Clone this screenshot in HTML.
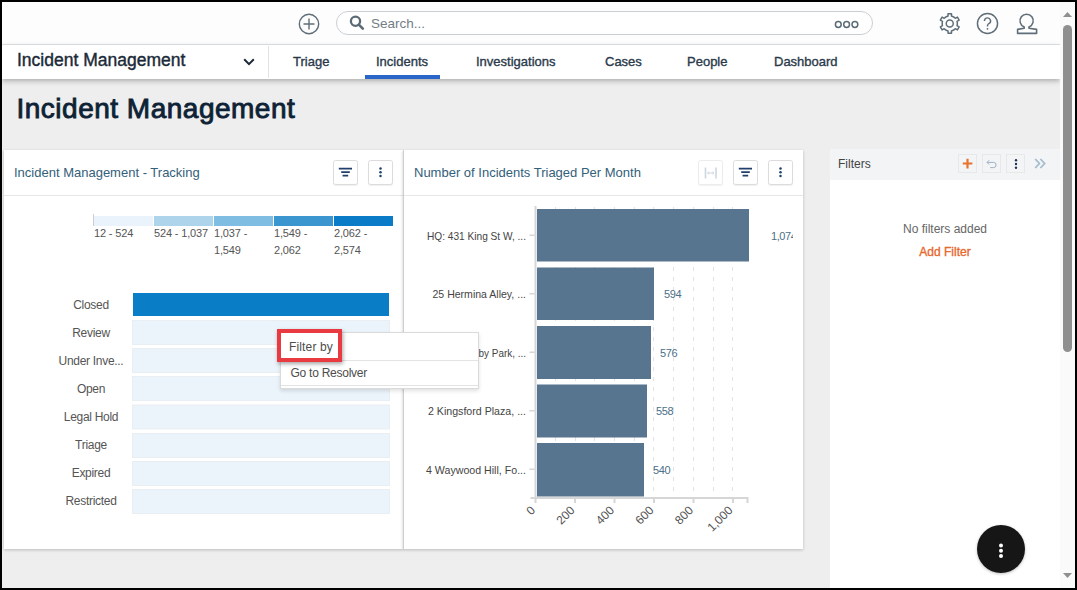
<!DOCTYPE html>
<html><head><meta charset="utf-8">
<style>
*{box-sizing:border-box;margin:0;padding:0}
html,body{width:1077px;height:590px;overflow:hidden;background:#000;font-family:"Liberation Sans",sans-serif}
.a{position:absolute}
#app{position:absolute;left:2px;top:2px;width:1073px;height:586px;background:#eeeeee;overflow:hidden}
#top{left:0;top:0;width:1058px;height:43px;background:#fdfdfd;border-bottom:1px solid #e1e5e8}
#nav{left:0;top:43px;width:1058px;height:34px;background:#fff;box-shadow:0 2px 5px rgba(0,0,0,0.28)}
.navi{top:0;height:33px;line-height:33px;font-size:13px;color:#2a3a4a;-webkit-text-stroke:0.35px #2a3a4a}
#sb{left:1058px;top:0;width:15px;height:586px;background:#fafafa}
.card{background:#fff;box-shadow:0 1px 3px rgba(0,0,0,0.22)}
.btn{width:25px;height:25px;border:1px solid #dcdcdc;border-radius:2.5px;background:#fff;box-shadow:0 1px 1px rgba(0,0,0,0.06)}
.ttl{font-size:13px;color:#33607a;white-space:nowrap}
.lbl{font-size:12px;color:#555;white-space:nowrap}
.bar{left:128px;width:258px;height:25px;background:#ebf3fb;border:1px solid #e9edf0}
</style></head><body>
<div id="app">
  <!-- top bar -->
  <div id="top" class="a">
    <svg class="a" style="left:296px;top:10.5px" width="22" height="22" viewBox="0 0 22 22"><circle cx="11" cy="11" r="9.7" fill="none" stroke="#5f6e78" stroke-width="1.4"/><path d="M11 5.5v11M5.5 11h11" stroke="#5f6e78" stroke-width="1.4"/></svg>
    <div class="a" style="left:334px;top:9px;width:537px;height:24px;border:1px solid #c9cfd3;border-radius:12px;background:#fff"></div>
    <svg class="a" style="left:347px;top:13px" width="16" height="15" viewBox="0 0 16 15"><circle cx="6.5" cy="6.3" r="4.6" fill="none" stroke="#5b6b76" stroke-width="2.3"/><path d="M9.8 9.6l4 4" stroke="#5b6b76" stroke-width="2.6" stroke-linecap="round"/></svg>
    <div class="a" style="left:369px;top:14px;font-size:13.5px;line-height:16px;color:#737d86">Search...</div>
    <svg class="a" style="left:832px;top:18px" width="26" height="9" viewBox="0 0 26 9"><circle cx="4.3" cy="4.5" r="2.9" fill="none" stroke="#5b6b76" stroke-width="1.5"/><circle cx="12.6" cy="4.5" r="2.9" fill="none" stroke="#5b6b76" stroke-width="1.5"/><circle cx="20.9" cy="4.5" r="2.9" fill="none" stroke="#5b6b76" stroke-width="1.5"/></svg>
    <!-- gear -->
    <svg class="a" style="left:936px;top:10px" width="24" height="24" viewBox="0 0 24 24"><path fill="none" stroke="#5f6e78" stroke-width="1.5" stroke-linejoin="round" d="M8.90 4.45 L10.04 4.09 L10.01 1.65 L13.49 1.65 L13.46 4.09 L14.60 4.45 L16.43 5.51 L17.31 6.32 L19.41 5.07 L21.15 8.08 L19.02 9.28 L19.28 10.44 L19.28 12.56 L19.02 13.72 L21.15 14.92 L19.41 17.93 L17.31 16.68 L16.43 17.49 L14.60 18.55 L13.46 18.91 L13.49 21.35 L10.01 21.35 L10.04 18.91 L8.90 18.55 L7.07 17.49 L6.19 16.68 L4.09 17.93 L2.35 14.92 L4.48 13.72 L4.22 12.56 L4.22 10.44 L4.48 9.28 L2.35 8.08 L4.09 5.07 L6.19 6.32 L7.07 5.51Z"/><circle cx="11.75" cy="11.5" r="3.5" fill="none" stroke="#5f6e78" stroke-width="1.5"/></svg>
    <!-- help -->
    <svg class="a" style="left:974px;top:10px" width="23" height="23" viewBox="0 0 24 24"><circle cx="12" cy="12" r="10.5" fill="none" stroke="#5f6e78" stroke-width="1.5"/><path d="M8.8 9.3a3.2 3.2 0 1 1 4.6 2.9c-1 .5-1.4 1.1-1.4 2.2v.6" fill="none" stroke="#5f6e78" stroke-width="1.5"/><circle cx="12" cy="17.6" r="1" fill="#5f6e78"/></svg>
    <!-- user -->
    <svg class="a" style="left:1013px;top:10px" width="24" height="24" viewBox="0 0 24 24"><path fill="none" stroke="#5f6e78" stroke-width="1.6" stroke-linejoin="round" d="M9.2 14.95A6.6 6.6 0 1 1 14 14.95V16.3L21.6 17.4V21.4H2.6V17.4L9.2 16.3Z"/></svg>
  </div>
  <!-- nav -->
  <div id="nav" class="a">
    <div class="a" style="left:15px;top:-1.5px;height:33px;line-height:33px;font-size:17.5px;color:#1b2a38;-webkit-text-stroke:0.4px #1b2a38">Incident Management</div>
    <svg class="a" style="left:241px;top:13px" width="12" height="8" viewBox="0 0 12 8"><path d="M1.2 1.3l4.8 4.8 4.8-4.8" fill="none" stroke="#1b2a38" stroke-width="2"/></svg>
    <div class="a" style="left:266px;top:1px;width:1px;height:32px;background:#e3e3e3"></div>
    <div class="a navi" style="left:291px">Triage</div>
    <div class="a navi" style="left:374px">Incidents</div>
    <div class="a" style="left:363px;top:30px;width:75px;height:4px;background:#2a66c9"></div>
    <div class="a navi" style="left:474px">Investigations</div>
    <div class="a navi" style="left:603px">Cases</div>
    <div class="a navi" style="left:685px">People</div>
    <div class="a navi" style="left:772px">Dashboard</div>
  </div>
  <!-- heading -->
  <div class="a" style="left:14.5px;top:90px;font-size:28px;line-height:34px;letter-spacing:0.5px;color:#0e2236;-webkit-text-stroke:0.9px #0e2236;white-space:nowrap">Incident Management</div>

  <!-- card 1 -->
  <div class="a card" style="left:2px;top:148px;width:399px;height:399px">
    <div class="a ttl" style="left:10px;top:13.5px;line-height:17px">Incident Management - Tracking</div>
    <div class="a btn" style="left:329px;top:10px"><svg class="a" style="left:4px;top:6px" width="15" height="11" viewBox="0 0 15 11"><path d="M0.8 1.6h13.2M3.2 5.2h8.6M4.6 8.7h5.6" stroke="#1f4068" stroke-width="1.8"/></svg></div>
    <div class="a btn" style="left:364px;top:10px"><svg class="a" style="left:9px;top:4.3px" width="5" height="14" viewBox="0 0 5 14"><circle cx="2.5" cy="3.5" r="1.25" fill="#1f4068"/><circle cx="2.5" cy="7.2" r="1.25" fill="#1f4068"/><circle cx="2.5" cy="11" r="1.25" fill="#1f4068"/></svg></div>
    <div class="a" style="left:0;top:45px;width:399px;height:1px;background:#e6e6e6"></div>
  </div>

  <!-- card 2 -->
  <div class="a card" style="left:401px;top:148px;width:400px;height:399px;border-left:1px solid #cfcfcf">
    <div class="a ttl" style="left:10px;top:13.5px;line-height:17px">Number of Incidents Triaged Per Month</div>
    <div class="a btn" style="left:294px;top:10px;border-color:#ececec"><svg class="a" style="left:3.5px;top:4.7px" width="15" height="14" viewBox="0 0 15 14"><path d="M2.5 1.5v11M13 1.5v11" stroke="#cdd7e0" stroke-width="1.6"/><path d="M4.5 7h6.5M6 5.6L4.6 7 6 8.4M9.5 5.6L10.9 7 9.5 8.4" fill="none" stroke="#cdd7e0" stroke-width="1"/></svg></div>
    <div class="a btn" style="left:329px;top:10px"><svg class="a" style="left:4px;top:6px" width="15" height="11" viewBox="0 0 15 11"><path d="M0.8 1.6h13.2M3.2 5.2h8.6M4.6 8.7h5.6" stroke="#1f4068" stroke-width="1.8"/></svg></div>
    <div class="a btn" style="left:364px;top:10px"><svg class="a" style="left:9px;top:4.3px" width="5" height="14" viewBox="0 0 5 14"><circle cx="2.5" cy="3.5" r="1.25" fill="#1f4068"/><circle cx="2.5" cy="7.2" r="1.25" fill="#1f4068"/><circle cx="2.5" cy="11" r="1.25" fill="#1f4068"/></svg></div>
    <div class="a" style="left:0;top:45px;width:399px;height:1px;background:#e6e6e6"></div>
  </div>


  <!-- charts overlay (page coords) -->
  <svg class="a" style="left:-2px;top:-2px" width="1077" height="590" viewBox="0 0 1077 590"><defs><clipPath id="cl"><rect x="404" y="196" width="389" height="352"/></clipPath></defs>
    <g font-family="Liberation Sans" font-size="11" fill="#555" letter-spacing="-0.15">
      <rect x="93" y="214" width="1" height="12" fill="#cfcfcf"/>
      <rect x="94" y="216" width="59" height="10" fill="#eaf3fb"/>
      <rect x="154" y="216" width="59" height="10" fill="#aed4ec"/>
      <rect x="214" y="216" width="59" height="10" fill="#80bde3"/>
      <rect x="274" y="216" width="59" height="10" fill="#3b95cf"/>
      <rect x="334" y="216" width="59" height="10" fill="#0a7bc6"/>
      <text x="94" y="237">12 - 524</text>
      <text x="154" y="237">524 - 1,037</text>
      <text x="214" y="237">1,037 -</text><text x="214" y="254">1,549</text>
      <text x="274" y="237">1,549 -</text><text x="274" y="254">2,062</text>
      <text x="334" y="237">2,062 -</text><text x="334" y="254">2,574</text>
    </g>
    <g font-family="Liberation Sans" font-size="12" fill="#555" text-anchor="middle" letter-spacing="-0.3">
      <rect x="133" y="293" width="256" height="23" fill="#0a7dc7"/>
      <rect x="132.5" y="320.5" width="257" height="24" fill="#ebf3fb" stroke="#e9eef2"/>
      <rect x="132.5" y="348.5" width="257" height="24" fill="#ebf3fb" stroke="#e9eef2"/>
      <rect x="132.5" y="376.5" width="257" height="24" fill="#ebf3fb" stroke="#e9eef2"/>
      <rect x="132.5" y="405" width="257" height="24" fill="#ebf3fb" stroke="#e9eef2"/>
      <rect x="132.5" y="433.5" width="257" height="24" fill="#ebf3fb" stroke="#e9eef2"/>
      <rect x="132.5" y="461.5" width="257" height="24" fill="#ebf3fb" stroke="#e9eef2"/>
      <rect x="132.5" y="489.5" width="257" height="24" fill="#ebf3fb" stroke="#e9eef2"/>
      <text x="91" y="309.3">Closed</text>
      <text x="91" y="337.3">Review</text>
      <text x="91" y="365.3">Under Inve...</text>
      <text x="91" y="393.3">Open</text>
      <text x="91" y="421.3">Legal Hold</text>
      <text x="91" y="449.3">Triage</text>
      <text x="91" y="477.3">Expired</text>
      <text x="91" y="505.3">Restricted</text>
    </g>
    <g stroke="#e3e3e3" stroke-width="1" stroke-dasharray="4,6" stroke-dashoffset="-1">
      <path d="M555.5 206V497M575.5 206V497M594.5 206V497M614.5 206V497M634.5 206V497M653.5 206V497M673.5 206V497M693.5 206V497M713.5 206V497M732.5 206V497"/>
    </g>
    <g fill="#587590">
      <rect x="537" y="209" width="212" height="52.5"/>
      <rect x="537" y="267.5" width="117" height="52.5"/>
      <rect x="537" y="326" width="114" height="53"/>
      <rect x="537" y="384.5" width="110" height="53"/>
      <rect x="537" y="443" width="107" height="53.5"/>
    </g>
    <g fill="#d6d6d6">
      <rect x="534.5" y="206" width="2" height="293"/>
      <rect x="530.5" y="497" width="217" height="2"/>
      <rect x="534.5" y="497" width="2" height="6"/>
      <rect x="574" y="497" width="2" height="6"/>
      <rect x="613.5" y="497" width="2" height="6"/>
      <rect x="653" y="497" width="2" height="6"/>
      <rect x="692.5" y="497" width="2" height="6"/>
      <rect x="732" y="497" width="2" height="6"/>
      <rect x="746.5" y="497" width="2" height="6"/>
      <rect x="529.5" y="234.5" width="5" height="1.5"/>
      <rect x="529.5" y="293" width="5" height="1.5"/>
      <rect x="529.5" y="351.5" width="5" height="1.5"/>
      <rect x="529.5" y="410" width="5" height="1.5"/>
      <rect x="529.5" y="468.5" width="5" height="1.5"/>
    </g>
    <g font-family="Liberation Sans" font-size="11" fill="#4d6f88" letter-spacing="-0.4">
      <text x="771" y="239.5" clip-path="url(#cl)">1,074</text>
      <text x="664" y="298">594</text>
      <text x="660" y="356.5">576</text>
      <text x="656" y="415">558</text>
      <text x="653" y="473.5">540</text>
    </g>
    <g font-family="Liberation Sans" font-size="11.5" fill="#444" text-anchor="end" lengthAdjust="spacingAndGlyphs">
      <text x="526" y="239.5" textLength="99" lengthAdjust="spacingAndGlyphs">HQ: 431 King St W, ...</text>
      <text x="526" y="298" textLength="93.5" lengthAdjust="spacingAndGlyphs">25 Hermina Alley, ...</text>
      <text x="526" y="356.5" textLength="47.5" lengthAdjust="spacingAndGlyphs">by Park, ...</text>
      <text x="526" y="415" textLength="98" lengthAdjust="spacingAndGlyphs">2 Kingsford Plaza, ...</text>
      <text x="526" y="473.5" textLength="100" lengthAdjust="spacingAndGlyphs">4 Waywood Hill, Fo...</text>
    </g>
    <g font-family="Liberation Sans" font-size="12" fill="#555" text-anchor="end">
      <text transform="translate(536,511) rotate(-45)">0</text>
      <text transform="translate(575.5,511) rotate(-45)">200</text>
      <text transform="translate(615,511) rotate(-45)">400</text>
      <text transform="translate(654.5,511) rotate(-45)">600</text>
      <text transform="translate(694,511) rotate(-45)">800</text>
      <text transform="translate(733.5,511) rotate(-45)">1,000</text>
    </g>
  </svg>
  <!-- context menu -->
  <div class="a" style="left:277.5px;top:330px;width:199px;height:57px;background:#fff;border:1px solid #dadada;box-shadow:0 2px 4px rgba(0,0,0,0.12)">
    <div class="a" style="left:0;top:27px;width:197px;height:1px;background:#e3e3e3"></div>
    <div class="a" style="left:0;top:52px;width:197px;height:1px;background:#e3e3e3"></div>
    <div class="a" style="left:10px;top:33px;font-size:12px;line-height:14px;color:#4d4d4d;letter-spacing:-0.25px;white-space:nowrap">Go to Resolver</div>
  </div>
  <div class="a" style="left:274.5px;top:327.3px;width:65.5px;height:32.3px;border:4px solid #e83a40;background:#fff;box-shadow:1px 2px 4px rgba(0,0,0,0.35)">
    <div class="a" style="left:8.5px;top:7px;font-size:12px;line-height:14px;color:#4d4d4d;letter-spacing:0.15px;white-space:nowrap">Filter by</div>
  </div>

  <!-- filters panel -->
  <div class="a" style="left:828px;top:147px;width:230px;height:439px;background:#fff">
    <div class="a" style="left:0;top:0;width:230px;height:31px;background:#f3f4f6"></div>
    <div class="a" style="left:8px;top:8px;font-size:12px;line-height:15px;color:#444">Filters</div>
    <div class="a" style="left:128px;top:5px;width:19px;height:19px;border:1px solid #e6e8ea"><svg class="a" style="left:3px;top:3px" width="11" height="11" viewBox="0 0 11 11"><path d="M5.5 0.8v9.6M0.8 5.5h9.6" stroke="#e8732d" stroke-width="2.2"/></svg></div>
    <div class="a" style="left:152px;top:5px;width:19px;height:19px;border:1px solid #e6e8ea"><svg class="a" style="left:3px;top:4px" width="12" height="10" viewBox="0 0 12 10"><path d="M3.2 1.2L1 3.4l2.2 2.2M1.2 3.4h6.3a2.6 2.6 0 0 1 0 5.2H4.2" fill="none" stroke="#9fb0c0" stroke-width="1"/></svg></div>
    <div class="a" style="left:176px;top:5px;width:19px;height:19px;border:1px solid #e6e8ea"><svg class="a" style="left:7px;top:3px" width="4" height="12" viewBox="0 0 4 12"><circle cx="2" cy="2.3" r="1.2" fill="#1f3550"/><circle cx="2" cy="6" r="1.2" fill="#1f3550"/><circle cx="2" cy="9.7" r="1.2" fill="#1f3550"/></svg></div>
    <svg class="a" style="left:204px;top:9px" width="12" height="11" viewBox="0 0 12 11"><path d="M1.2 1l4.2 4.5-4.2 4.5M6.4 1l4.2 4.5-4.2 4.5" fill="none" stroke="#a5bbcf" stroke-width="1.8"/></svg>
    <div class="a" style="left:0;top:72.5px;width:230px;text-align:center;font-size:12px;line-height:15px;color:#666">No filters added</div>
    <div class="a" style="left:0;top:96px;width:230px;text-align:center;font-size:12px;line-height:15px;color:#e8682d;-webkit-text-stroke:0.35px #e8682d">Add Filter</div>
  </div>

  <!-- scrollbar -->
  <div id="sb" class="a">
    <div class="a" style="left:3px;top:23px;width:9px;height:327px;border-radius:5px;background:#8f8f8f"></div>
    <svg class="a" style="left:3px;top:10px" width="9" height="5" viewBox="0 0 9 5"><path d="M4.5 0L9 5H0z" fill="#8f8f8f"/></svg>
    <svg class="a" style="left:3px;top:571px" width="9" height="5" viewBox="0 0 9 5"><path d="M0 0h9L4.5 5z" fill="#8f8f8f"/></svg>
  </div>

  <!-- FAB -->
  <div class="a" style="left:975px;top:523px;width:48px;height:48px;border-radius:50%;background:#161616;box-shadow:0 1px 3px rgba(0,0,0,0.25)"><svg class="a" style="left:21px;top:15px" width="6" height="18" viewBox="0 0 6 18"><circle cx="3" cy="5.5" r="2" fill="#fff"/><circle cx="3" cy="10.7" r="2" fill="#fff"/><circle cx="3" cy="16" r="2" fill="#fff"/></svg></div>
</div>
</body></html>
